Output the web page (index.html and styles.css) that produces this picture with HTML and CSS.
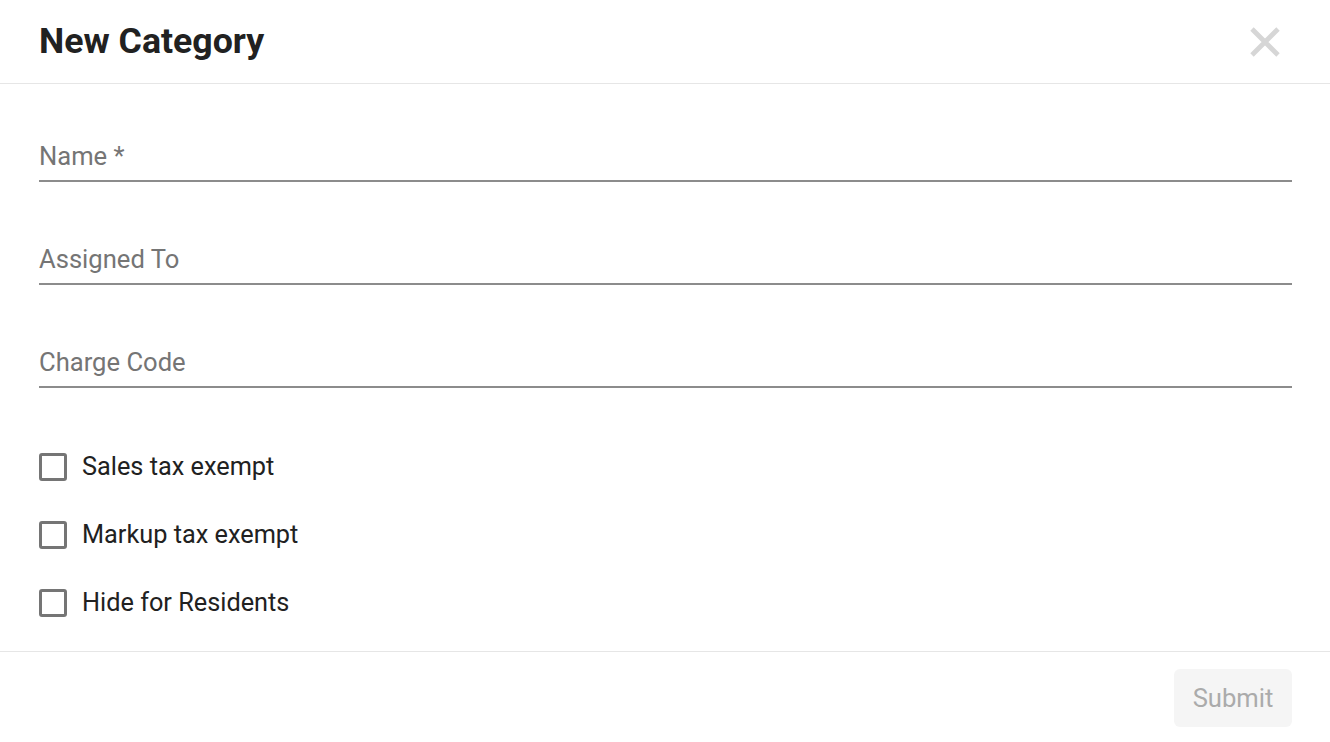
FILE: index.html
```html
<!DOCTYPE html>
<html lang="en">
<head>
<meta charset="utf-8">
<title>New Category</title>
<link rel="stylesheet" href="styles.css">
</head>
<body>
<div class="dialog">
  <header class="dialog-header">
    <h1 class="dialog-title">New Category</h1>
    <button class="close-btn" aria-label="Close">
      <svg viewBox="0 0 48 48" width="48" height="48"><path d="M11 11L37 37M37 11L11 37" stroke="#d6d6d6" stroke-width="4.8" fill="none"/></svg>
    </button>
  </header>
  <main class="dialog-content">
    <div class="field"><span class="field-label">Name *</span></div>
    <div class="field"><span class="field-label">Assigned To</span></div>
    <div class="field"><span class="field-label">Charge Code</span></div>
    <div class="checks">
      <label class="check"><span class="box"></span><span class="check-label">Sales tax exempt</span></label>
      <label class="check"><span class="box"></span><span class="check-label">Markup tax exempt</span></label>
      <label class="check"><span class="box"></span><span class="check-label">Hide for Residents</span></label>
    </div>
  </main>
  <footer class="dialog-footer">
    <button class="submit-btn" disabled>Submit</button>
  </footer>
</div>
</body>
</html>
```
FILE: styles.css
```css
* { box-sizing: border-box; }
html, body { margin: 0; padding: 0; background: #fff; }
body { font-family: Roboto, "Liberation Sans", Arial, sans-serif; color: #212121; }
.dialog { width: 1330px; height: 742px; display: flex; flex-direction: column; }
.dialog-header {
  height: 84px;
  border-bottom: 1px solid #e6e6e6;
  display: flex;
  align-items: center;
  justify-content: space-between;
  padding: 0 41px 0 39px;
}
.dialog-title { margin: 0; font-size: 35.7px; font-weight: 700; line-height: 41px; color: #212121; }
.close-btn { border: 0; background: none; padding: 0; width: 48px; height: 48px; display: flex; cursor: pointer; }
.dialog-content { padding: 57px 38px 28px 39px; display: flex; flex-direction: column; gap: 62px; }
.field {
  border-bottom: 2px solid #8c8c8c;
  padding-bottom: 9px;
  height: 41px;
}
.field-label { font-size: 25.6px; line-height: 30px; color: #757575; display: block; }
.checks { display: flex; flex-direction: column; gap: 28px; margin-top: -3px; }
.check { display: flex; align-items: center; height: 40px; gap: 15px; }
.box { width: 28px; height: 28px; border: 3px solid #757575; border-radius: 3px; flex: none; }
.check-label { font-size: 25.3px; line-height: 30px; color: #212121; }
.dialog-footer {
  border-top: 1px solid #e6e6e6;
  padding: 17px 38px 0 0;
  display: flex;
  justify-content: flex-end;
  flex: 1;
}
.submit-btn {
  width: 118px; height: 58px;
  border: 0; border-radius: 6px;
  background: #f5f5f5; color: #ababab;
  font-family: Roboto, "Liberation Sans", Arial, sans-serif;
  font-size: 25.6px;
  padding: 0;
}
```
